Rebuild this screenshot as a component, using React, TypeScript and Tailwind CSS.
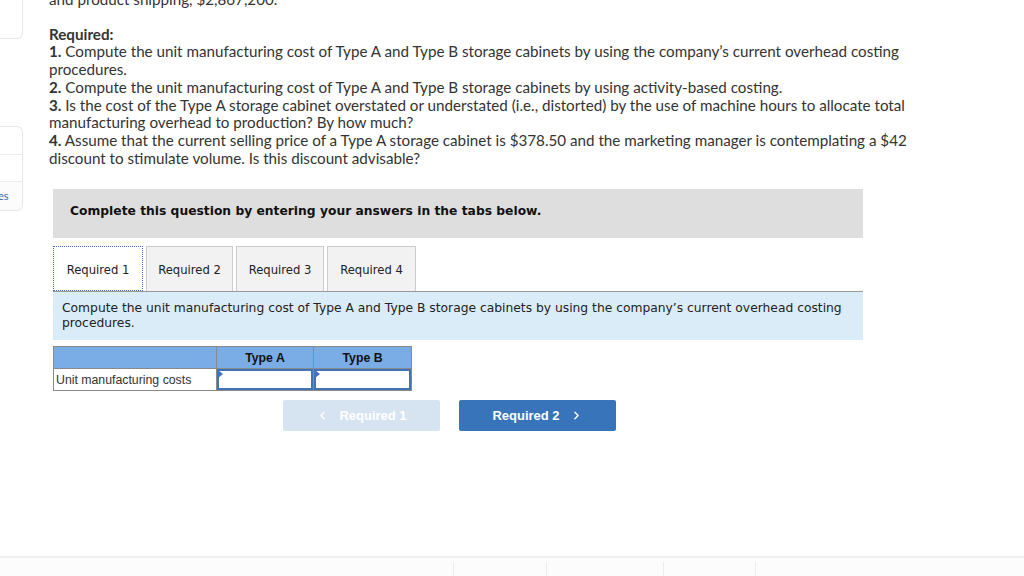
import { ChevronLeft, ChevronRight } from "lucide-react";

const tabs = [
  { label: "Required 1", w: "w-[90px]" },
  { label: "Required 2", w: "w-[87px]" },
  { label: "Required 3", w: "w-[88px]" },
  { label: "Required 4", w: "w-[89px]" },
];

function SideCards() {
  return (
    <div className="w-[23px] shrink-0 pt-0">
      <div className="h-[40px] -mt-[1px] rounded-br-md border-r border-b border-[#e6e6e6] bg-white" />
      <div className="mt-[87px] rounded-r-md border-y border-r border-[#e6e6e6] bg-white overflow-hidden">
        <div className="h-[28px] border-b border-[#ececec]" />
        <div className="h-[27px] border-b border-[#ececec]" />
        <div className="h-[28px] flex items-center bg-[#fcfcfc]">
          <span className="text-[11px] text-[#2f6fb3] -ml-[2px]" style={{ fontFamily: "Lato, sans-serif" }}>
            es
          </span>
        </div>
      </div>
    </div>
  );
}

function AnswerCell() {
  return (
    <td className="border border-[#8a8a8a] p-0">
      <div className="relative h-[21px] border-2 border-[#3f72b6] bg-white">
        <span className="absolute -left-[1px] -top-[1px] w-0 h-0 border-y-[4px] border-y-transparent border-l-[5px] border-l-[#3f72b6]" />
      </div>
    </td>
  );
}

export default function App() {
  const proxima = { fontFamily: "Lato, 'Open Sans', sans-serif" };
  const verdana = { fontFamily: "'DejaVu Sans', Verdana, sans-serif" };
  const arial = { fontFamily: "'Liberation Sans', Arial, sans-serif" };

  return (
    <div className="w-[1024px] h-[576px] bg-white overflow-hidden flex flex-col">
      <div className="flex flex-1">
        <SideCards />
        <div className="flex-1 pl-[26px]">
          <div className="text-[15.2px] leading-[17.7px] text-[#333] -mt-[9px] pr-[90px]" style={proxima}>
            <p>and product shipping, $2,867,200.</p>
            <p className="mt-[17px] font-bold">Required:</p>
            <p>
              <b>1.</b> Compute the unit manufacturing cost of Type A and Type B storage cabinets by using the company’s current overhead costing procedures.
            </p>
            <p>
              <b>2.</b> Compute the unit manufacturing cost of Type A and Type B storage cabinets by using activity-based costing.
            </p>
            <p>
              <b>3.</b> Is the cost of the Type A storage cabinet overstated or understated (i.e., distorted) by the use of machine hours to allocate total manufacturing overhead to production? By how much?
            </p>
            <p>
              <b>4.</b> Assume that the current selling price of a Type A storage cabinet is $378.50 and the marketing manager is contemplating a $42 discount to stimulate volume. Is this discount advisable?
            </p>
          </div>

          <div className="ml-[4px] mt-[22px] w-[810px]">
            <div className="h-[49px] bg-[#dedede] flex items-center pl-[17px] pb-[6px]">
              <span className="text-[12.3px] font-bold text-[#111]" style={verdana}>
                Complete this question by entering your answers in the tabs below.
              </span>
            </div>

            <div className="mt-[8px] flex gap-[3px] border-b border-[#999]">
              {tabs.map((t, i) => (
                <div
                  key={t.label}
                  className={
                    i === 0
                      ? `${t.w} h-[45px] -mb-px pt-[3px] flex items-center justify-center bg-white border border-dotted border-[#3a6fb5] text-[11.6px] text-[#222]`
                      : `${t.w} h-[45px] pt-[3px] flex items-center justify-center bg-[#f2f2f2] border border-b-0 border-[#cbcbcb] text-[11.6px] text-[#222]`
                  }
                  style={verdana}
                >
                  {t.label}
                </div>
              ))}
            </div>

            <div className="bg-[#dbecf9] px-[9px] pt-[9px] pb-[9px] text-[12.3px] leading-[15px] text-[#222]" style={verdana}>
              Compute the unit manufacturing cost of Type A and Type B storage cabinets by using the company’s current overhead costing procedures.
            </div>

            <table className="mt-[6px] border-collapse text-[12.3px]" style={arial}>
              <thead>
                <tr className="h-[22px] bg-[#7aade6]">
                  <th className="w-[163px] border border-[#8a8a8a]" />
                  <th className="w-[97px] border border-[#8a8a8a] font-bold text-[#111]">Type A</th>
                  <th className="w-[98px] border border-[#8a8a8a] font-bold text-[#111]">Type B</th>
                </tr>
              </thead>
              <tbody>
                <tr className="h-[22px]">
                  <td className="border border-[#8a8a8a] pl-[2px] text-[#333]">Unit manufacturing costs</td>
                  <AnswerCell />
                  <AnswerCell />
                </tr>
              </tbody>
            </table>

            <div className="mt-[9px] ml-[230px] flex gap-[19px]" style={arial}>
              <button className="w-[157px] h-[31px] rounded-[2px] bg-[#d6e3f1] text-white font-bold text-[13px] flex items-center justify-center gap-[10px]">
                <ChevronLeft className="w-[13px] h-[13px]" strokeWidth={2.5} />
                Required 1
              </button>
              <button className="w-[157px] h-[31px] rounded-[2px] bg-[#3874ba] text-white font-bold text-[13px] flex items-center justify-center gap-[10px]">
                Required 2
                <ChevronRight className="w-[13px] h-[13px]" strokeWidth={2.5} />
              </button>
            </div>
          </div>
        </div>
      </div>

      <div className="h-[20px] shrink-0 border-t-2 border-[#f0f0f0] bg-[#fcfcfc] flex">
        <div className="w-[453px]" />
        <div className="mt-[4px] w-[93px] border-l border-[#ececec]" />
        <div className="mt-[4px] w-[117px] border-l border-[#ececec]" />
        <div className="mt-[4px] w-[92px] border-l border-[#ececec]" />
        <div className="mt-[4px] border-l border-[#ececec]" />
      </div>
    </div>
  );
}
